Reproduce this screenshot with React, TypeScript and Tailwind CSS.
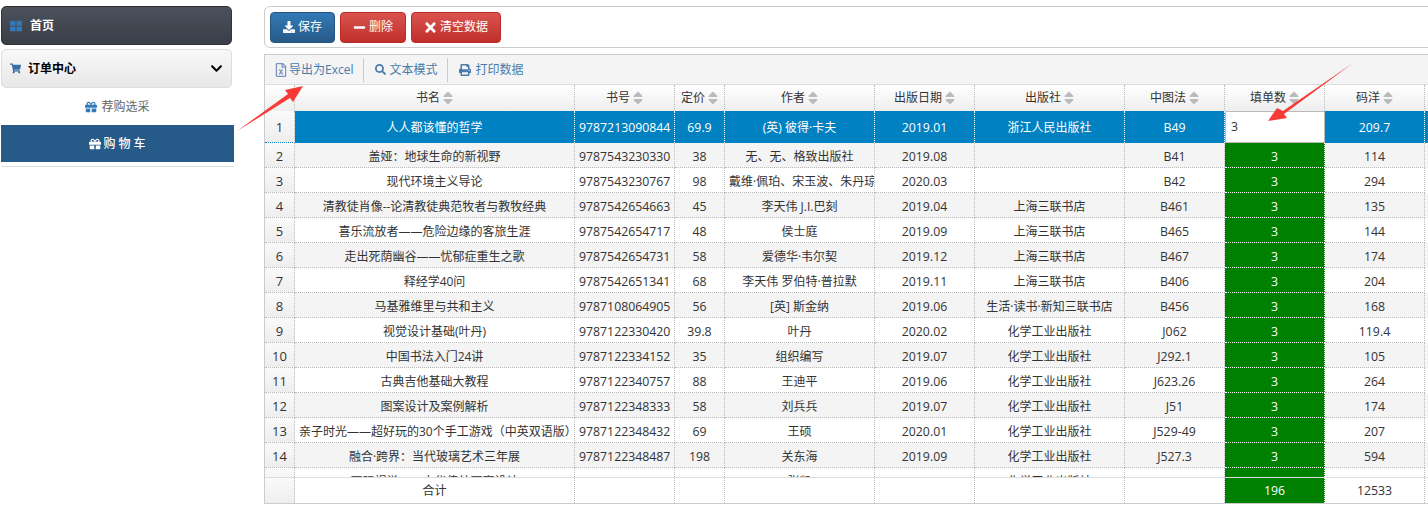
import React from "react";
import { FaThLarge, FaShoppingCart, FaChevronDown, FaGift, FaDownload, FaMinus, FaTimes, FaRegFileExcel, FaSearch, FaPrint, FaSort } from "react-icons/fa";

const W = ["w-[280px]", "w-[100px]", "w-[50px]", "w-[150px]", "w-[100px]", "w-[150px]", "w-[100px]", "w-[100px]", "w-[100px]"];
const HEAD = ["书名", "书号", "定价", "作者", "出版日期", "出版社", "中图法", "填单数", "码洋"];
const NUMERIC = [false, true, true, false, true, false, true, true, true];

const ROWS: string[][] = [
  ["盖娅：地球生命的新视野", "9787543230330", "38", "无、无、格致出版社", "2019.08", "", "B41", "3", "114"],
  ["现代环境主义导论", "9787543230767", "98", "戴维·佩珀、宋玉波、朱丹琼", "2020.03", "", "B42", "3", "294"],
  ["清教徒肖像--论清教徒典范牧者与教牧经典", "9787542654663", "45", "李天伟 J.I.巴刻", "2019.04", "上海三联书店", "B461", "3", "135"],
  ["喜乐流放者——危险边缘的客旅生涯", "9787542654717", "48", "侯士庭", "2019.09", "上海三联书店", "B465", "3", "144"],
  ["走出死荫幽谷——忧郁症重生之歌", "9787542654731", "58", "爱德华·韦尔契", "2019.12", "上海三联书店", "B467", "3", "174"],
  ["释经学40问", "9787542651341", "68", "李天伟 罗伯特·普拉默", "2019.11", "上海三联书店", "B406", "3", "204"],
  ["马基雅维里与共和主义", "9787108064905", "56", "[英] 斯金纳", "2019.06", "生活·读书·新知三联书店", "B456", "3", "168"],
  ["视觉设计基础(叶丹)", "9787122330420", "39.8", "叶丹", "2020.02", "化学工业出版社", "J062", "3", "119.4"],
  ["中国书法入门24讲", "9787122334152", "35", "组织编写", "2019.07", "化学工业出版社", "J292.1", "3", "105"],
  ["古典吉他基础大教程", "9787122340757", "88", "王迪平", "2019.06", "化学工业出版社", "J623.26", "3", "264"],
  ["图案设计及案例解析", "9787122348333", "58", "刘兵兵", "2019.07", "化学工业出版社", "J51", "3", "174"],
  ["亲子时光——超好玩的30个手工游戏（中英双语版）", "9787122348432", "69", "王硕", "2020.01", "化学工业出版社", "J529-49", "3", "207"],
  ["融合·跨界：当代玻璃艺术三年展", "9787122348487", "198", "关东海", "2019.09", "化学工业出版社", "J527.3", "3", "594"],
  ["国际视觉——中华传统图案设计", "9787122348500", "78", "张凯", "2019.10", "化学工业出版社", "J522", "3", "234"],
];

const FIRST = ["人人都该懂的哲学", "9787213090844", "69.9", "(英) 彼得·卡夫", "2019.01", "浙江人民出版社", "B49", "3", "209.7"];

function Btn({ color, icon, label }: { color: "blue" | "red"; icon: React.ReactNode; label: string }) {
  const cls =
    color === "blue"
      ? "bg-linear-to-b from-[#337ab7] to-[#265a88] border-[#245580]"
      : "bg-linear-to-b from-[#d9534f] to-[#c12e2a] border-[#b92c28]";
  return (
    <div className={`flex h-[31px] items-center justify-center gap-[3px] rounded-[4px] border px-[12px] text-[12px] text-white ${cls}`}>
      {icon}
      <span>{label}</span>
    </div>
  );
}

function ToolItem({ icon, label, gap }: { icon: React.ReactNode; label: string; gap: string }) {
  return (
    <div className={`flex items-center text-[12px] text-[#4a7cab] ${gap}`}>
      {icon}
      <span>{label}</span>
    </div>
  );
}

function NumCell({ n, h }: { n?: number; h: string }) {
  return (
    <div className={`w-[30px] shrink-0 border-r border-dotted border-[#bbb] bg-linear-to-b from-[#fafafa] to-[#eee] text-center text-[13px] text-[#333] ${h}`}>
      {n}
    </div>
  );
}

function Row({ cells, n, striped }: { cells: string[]; n: number; striped: boolean }) {
  return (
    <div className={`flex h-[25px] leading-[24px] ${striped ? "bg-[#f4f4f4]" : "bg-white"}`}>
      <div className="w-[30px] shrink-0 border-r border-b border-dotted border-[#bbb] bg-linear-to-b from-[#fafafa] to-[#eee] pt-[1px] text-center text-[13px] text-[#333]">
        {n}
      </div>
      {cells.map((c, i) => (
        <div
          key={i}
          className={`${W[i]} shrink-0 overflow-hidden whitespace-nowrap border-r border-b border-dotted px-[4px] pt-[2px] text-center ${
            i === 7 ? "border-white bg-[#008000] text-white" : "border-[#bbb] text-[#333]"
          } ${NUMERIC[i] ? "text-[12.3px]" : "text-[12px]"}`}
        >
          {c}
        </div>
      ))}
    </div>
  );
}

export default function App() {
  return (
    <div className="relative flex h-[509px] w-[1428px] overflow-hidden bg-white font-['Open_Sans','Noto_Sans_CJK_SC',sans-serif] text-[12px]">
      <aside className="w-[264px] shrink-0 pt-[6px]">
        <div className="ml-[1px] flex h-[39px] w-[231px] items-center rounded-[5px] border border-[#333] bg-linear-to-b from-[#4b515b] to-[#3a3e47] pl-[8px] font-bold text-white">
          <FaThLarge className="mr-[8px] text-[#337ab7]" size={12} />
          首页
        </div>
        <div className="ml-[1px] mt-[4px] flex h-[39px] w-[231px] items-center rounded-[5px] border border-[#ddd] bg-linear-to-b from-[#f8f8f8] to-[#e8e8e8] pl-[8px] pr-[8px] font-bold text-black">
          <FaShoppingCart className="mr-[7px] text-[#3b6ea5]" size={11} />
          订单中心
          <FaChevronDown className="ml-auto text-black" size={13} />
        </div>
        <div className="ml-[1px] flex h-[37px] w-[233px] items-center justify-center text-[#666]">
          <FaGift className="mr-[4px] text-[#337ab7]" size={12} />
          荐购选采
        </div>
        <div className="ml-[1px] flex h-[37px] w-[233px] items-center justify-center bg-[#265a88] font-medium text-white">
          <FaGift className="mr-[2px]" size={12} />
          购 物 车
        </div>
        <div className="ml-[1px] mt-[4px] h-px w-[233px] bg-[#ddd]" />
      </aside>

      <main className="flex w-[1170px] shrink-0 flex-col gap-[6px] pt-[6px]">
        <div className="flex h-[42px] items-center gap-[5px] rounded-[6px] border border-[#ccc] px-[5px]">
          <Btn color="blue" icon={<FaDownload size={12} />} label="保存" />
          <Btn color="red" icon={<FaMinus size={13} />} label="删除" />
          <Btn color="red" icon={<FaTimes size={15} className="-mx-px" />} label="清空数据" />
        </div>

        <div className="w-[1170px] border-t border-l border-[#ccc] border-b-0">
          <div className="flex h-[30px] items-center border-b border-[#ddd] bg-[#f4f4f4] pl-[9px]">
            <ToolItem gap="gap-[1px]" icon={<FaRegFileExcel size={14} className="text-[#7d93c4]" />} label="导出为Excel" />
            <div className="ml-[10px] mr-[11px] h-[24px] w-px bg-[#ccc]" />
            <ToolItem gap="gap-[3px]" icon={<FaSearch size={11} />} label="文本模式" />
            <div className="ml-[10px] mr-[11px] h-[24px] w-px bg-[#ccc]" />
            <ToolItem gap="gap-[4px]" icon={<FaPrint size={12} />} label="打印数据" />
          </div>

          <div className="flex h-[26px] items-center bg-linear-to-b from-white to-[#eee]">
            <div className="h-full w-[30px] shrink-0 border-r border-dotted border-[#bbb]" />
            {HEAD.map((h, i) => (
              <div key={i} className={`${W[i]} flex h-full shrink-0 items-center justify-center border-r border-dotted border-[#bbb] text-[12px] text-[#333]`}>
                {h}
                <FaSort size={16} className="-mr-[3px] text-[#bbb]" />
              </div>
            ))}
          </div>

          <div className="h-[366px] overflow-hidden">
            <div className="flex h-[32px] bg-[#0081c2] leading-[33px] text-white">
              <NumCell n={1} h="border-b border-b-[#0081c2]" />
              {FIRST.map((c, i) =>
                i === 7 ? (
                  <div key={i} className="w-[100px] shrink-0 border border-[#bbb] bg-white pl-[5px] text-[12.3px] leading-[29px] text-[#333]">
                    {c}
                  </div>
                ) : (
                  <div key={i} className={`${W[i]} shrink-0 overflow-hidden whitespace-nowrap border-r border-dotted border-white px-[4px] text-center ${NUMERIC[i] ? "text-[12.3px]" : "text-[12px]"}`}>
                    {c}
                  </div>
                )
              )}
            </div>
            {ROWS.map((r, i) => (
              <Row key={i} cells={r} n={i + 2} striped={i % 2 === 0} />
            ))}
          </div>

          <div className="flex h-[27px] border-y border-t-[#ddd] border-b-[#ccc] bg-white leading-[26px] text-[#333]">
            <NumCell h="h-full" />
            {W.map((w, i) => (
              <div
                key={i}
                className={`${w} shrink-0 border-r border-dotted text-center ${i === 7 ? "border-white bg-[#008000] text-white" : "border-[#bbb]"} ${NUMERIC[i] ? "text-[12.3px]" : "text-[12px]"}`}
              >
                {i === 0 ? "合计" : i === 7 ? "196" : i === 8 ? "12533" : ""}
              </div>
            ))}
          </div>
        </div>
      </main>

      <svg className="pointer-events-none absolute left-0 top-0" width="1428" height="509" viewBox="0 0 1428 509">
        <polygon points="237,131 288,94 285,90 303,86 293,102 290,98" fill="#f73a36" />
        <polygon points="1353,63 1283,111 1277,108 1268,121 1287,118 1284,114" fill="#f73a36" />
      </svg>
    </div>
  );
}
